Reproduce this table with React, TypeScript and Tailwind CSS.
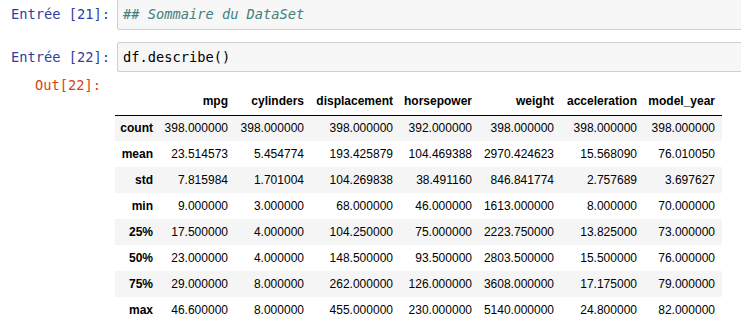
const COLUMNS = ['mpg', 'cylinders', 'displacement', 'horsepower', 'weight', 'acceleration', 'model_year'];
const COL_WIDTHS = ['w-[75px]', 'w-[76px]', 'w-[89px]', 'w-[79px]', 'w-[82px]', 'w-[83px]', 'w-[78px]'];

const ROWS: [string, string[]][] = [
  ['count', ['398.000000', '398.000000', '398.000000', '392.000000', '398.000000', '398.000000', '398.000000']],
  ['mean', ['23.514573', '5.454774', '193.425879', '104.469388', '2970.424623', '15.568090', '76.010050']],
  ['std', ['7.815984', '1.701004', '104.269838', '38.491160', '846.841774', '2.757689', '3.697627']],
  ['min', ['9.000000', '3.000000', '68.000000', '46.000000', '1613.000000', '8.000000', '70.000000']],
  ['25%', ['17.500000', '4.000000', '104.250000', '75.000000', '2223.750000', '13.825000', '73.000000']],
  ['50%', ['23.000000', '4.000000', '148.500000', '93.500000', '2803.500000', '15.500000', '76.000000']],
  ['75%', ['29.000000', '8.000000', '262.000000', '126.000000', '3608.000000', '17.175000', '79.000000']],
  ['max', ['46.600000', '8.000000', '455.000000', '230.000000', '5140.000000', '24.800000', '82.000000']],
];

const mono = "font-['DejaVu_Sans_Mono',monospace] text-[13.7px]";

function InputCell({ n, children, className = '' }: { n: number; children: React.ReactNode; className?: string }) {
  return (
    <div className={`flex ${className}`}>
      <div className={`w-[117px] shrink-0 pr-[7px] text-right text-[#303F9F] flex items-center justify-end ${mono}`}>
        Entrée&nbsp;[{n}]:
      </div>
      <div className={`flex-1 -mr-[10px] flex items-center px-[5px] bg-[#f7f7f7] border border-[#cfcfcf] rounded-[2px] ${mono}`}>
        {children}
      </div>
    </div>
  );
}

export default function App() {
  return (
    <div className="w-[741px] h-[330px] overflow-hidden bg-white text-black">
      <InputCell n={21} className="-mt-px h-[31px]">
        <span className="italic text-[#408080]">## Sommaire du DataSet</span>
      </InputCell>

      <InputCell n={22} className="mt-[12px] h-[30px]">
        <span>df.describe()</span>
      </InputCell>

      <div className="flex">
        <div className={`w-[115px] shrink-0 pr-[14px] pt-[5px] text-right text-[#D84315] leading-[17px] ${mono}`}>
          Out[22]:
        </div>
        <table className="mt-[15px] table-fixed border-collapse font-['Liberation_Sans',Arial,sans-serif] text-[12px]">
          <thead>
            <tr className="h-[28px] border-b border-black">
              <th className="w-[45px]" />
              {COLUMNS.map((c, i) => (
                <th key={c} className={`${COL_WIDTHS[i]} pr-[7px] text-right font-bold align-middle`}>
                  {c}
                </th>
              ))}
            </tr>
          </thead>
          <tbody>
            {ROWS.map(([label, vals], r) => (
              <tr key={label} className={`h-[26px] ${r % 2 === 0 ? 'bg-[#f5f5f5]' : ''}`}>
                <th className="pr-[7px] text-right font-bold">{label}</th>
                {vals.map((v, i) => (
                  <td key={i} className="pr-[7px] text-right">
                    {v}
                  </td>
                ))}
              </tr>
            ))}
          </tbody>
        </table>
      </div>
    </div>
  );
}
